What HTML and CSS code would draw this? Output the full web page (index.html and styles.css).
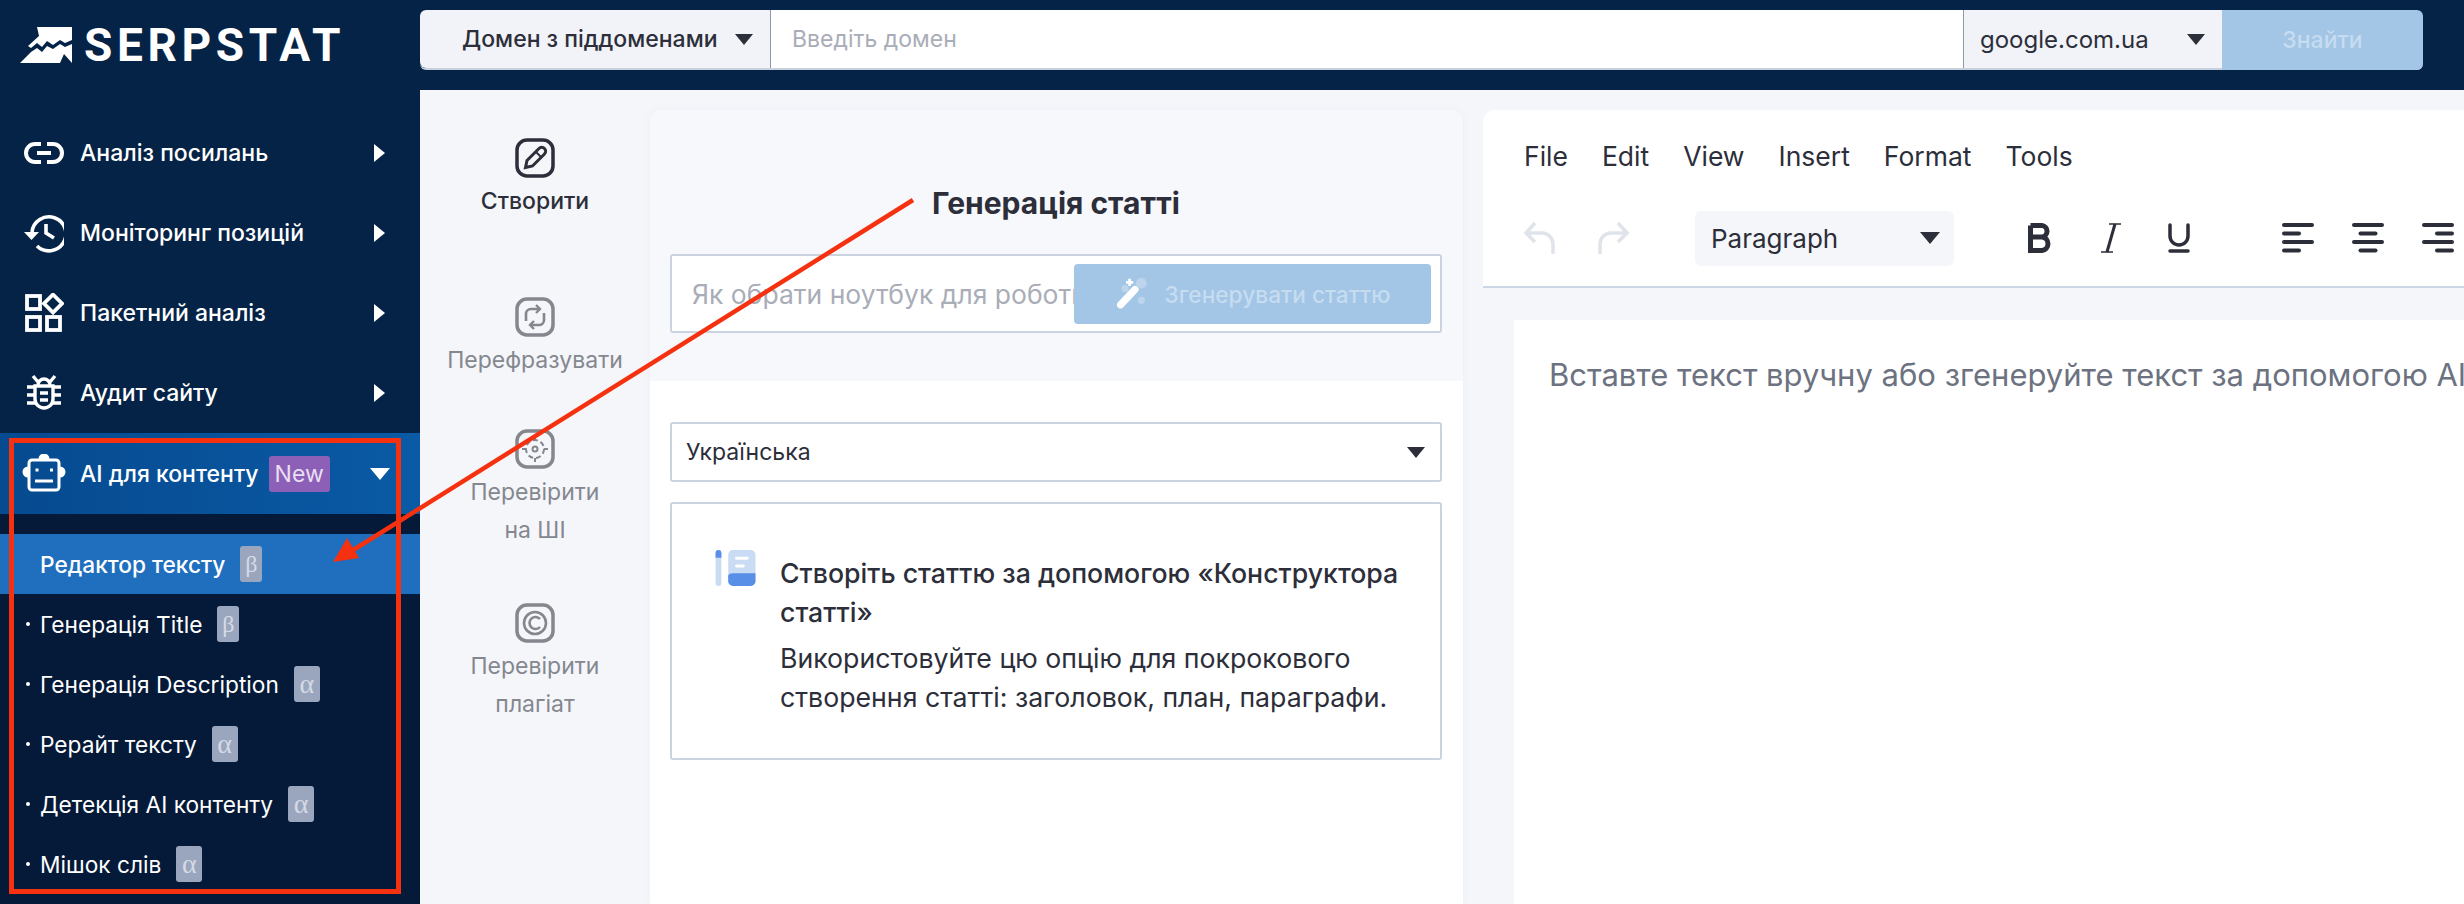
FILE: index.html
```html
<!DOCTYPE html>
<html lang="uk">
<head>
<meta charset="utf-8">
<title>Serpstat</title>
<link rel="stylesheet" href="styles.css">
</head>
<body>
<div class="app">
  <aside class="sidebar">
    <div class="brand">
      <svg class="brand-mark" viewBox="0 0 52 36"><path fill="#fff" d="M17 0H52V13L45 16L40 13L33 18L27 14L22 20L17 16L11 21L8 19L19 9Z"/><path fill="#fff" d="M0 36L11 25L17 21L22 25L27 19L33 22L40 17L45 20L52 17V36L44 27L40 36Z"/></svg>
      <span class="brand-name">SERPSTAT</span>
    </div>
    <nav class="nav">
      <a class="nav-item">
        <svg class="nav-icon" viewBox="0 0 40 40" fill="none" stroke="#fff" stroke-width="4"><path d="M17 11H11A9 9 0 0 0 11 29H17M23 11H29A9 9 0 0 1 29 29H23M13 20H27"/></svg>
        <span class="nav-text">Аналіз посилань</span><span class="caret-right"></span>
      </a>
      <a class="nav-item">
        <svg class="nav-icon" viewBox="0 0 40 40" fill="none" stroke="#fff" stroke-width="3.600"><path d="M8 19A17 17 0 1 1 13 33"/><path d="M22 11V20L30 25"/><path fill="#fff" stroke="none" d="M0 19H15L7.500 27Z"/></svg>
        <span class="nav-text">Моніторинг позицій</span><span class="caret-right"></span>
      </a>
      <a class="nav-item">
        <svg class="nav-icon" viewBox="0 0 40 40" fill="none" stroke="#fff" stroke-width="3.800"><rect x="3" y="3" width="13" height="13"/><path d="M29 1.500L38 10.500L29 19.500L20 10.500Z"/><rect x="3" y="24" width="13" height="13"/><rect x="23" y="24" width="13" height="13"/></svg>
        <span class="nav-text">Пакетний аналіз</span><span class="caret-right"></span>
      </a>
      <a class="nav-item">
        <svg class="nav-icon" viewBox="0 0 40 40" fill="none" stroke="#fff" stroke-width="3.400"><path d="M11 13H29V26A9 9 0 0 1 11 26Z"/><path d="M14 12A6 6 0 0 1 26 12M14 9L9 3M26 9L31 3M3 14H10M3 22H10M3 30H11M30 14H37M30 22H37M29 30H37M16 20H24M16 27H24"/></svg>
        <span class="nav-text">Аудит сайту</span><span class="caret-right"></span>
      </a>
      <a class="nav-item nav-item-open">
        <svg class="nav-icon nav-icon-robot" viewBox="0 0 44 40" fill="none" stroke="#fff" stroke-width="3"><rect x="7" y="6" width="30" height="30" rx="3"/><path d="M18 5A4 4 0 0 1 26 5Z" fill="#fff"/><path d="M6 13.500A4.500 4.500 0 0 0 6 22.500ZM38 13.500A4.500 4.500 0 0 1 38 22.500Z" fill="#fff" stroke-width="2"/><path d="M13 27H31"/><path d="M13.500 16H16.500M28 16H31"/></svg>
        <span class="nav-text">AI для контенту</span><span class="badge-new">New</span><span class="caret-down"></span>
      </a>
    </nav>
    <ul class="subnav">
      <li class="sub-item sub-item-active"><span class="sub-text">Редактор тексту</span><span class="tag tag-beta">β</span></li>
      <li class="sub-item"><span class="sub-text">Генерація Title</span><span class="tag tag-beta">β</span></li>
      <li class="sub-item"><span class="sub-text">Генерація Description</span><span class="tag">α</span></li>
      <li class="sub-item"><span class="sub-text">Рерайт тексту</span><span class="tag">α</span></li>
      <li class="sub-item"><span class="sub-text">Детекція AI контенту</span><span class="tag">α</span></li>
      <li class="sub-item"><span class="sub-text">Мішок слів</span><span class="tag">α</span></li>
    </ul>
    <div class="red-frame"></div>
  </aside>

  <div class="main">
    <header class="topbar">
      <div class="search">
        <div class="search-scope"><span>Домен з піддоменами</span><span class="caret-down caret-dark"></span></div>
        <div class="search-input">Введіть домен</div>
        <div class="search-engine"><span>google.com.ua</span><span class="caret-down caret-dark"></span></div>
        <div class="search-btn">Знайти</div>
      </div>
    </header>

    <div class="content">
      <div class="tools">
        <div class="tool tool-active">
          <svg class="tool-icon" viewBox="0 0 40 40" fill="none" stroke="currentColor" stroke-width="3.500"><rect x="2" y="2" width="36" height="36" rx="10"/><path d="M10.500 29.500L12 22.500L24 10.500A3.500 3.500 0 0 1 29.500 16L17.500 28Z" stroke-width="3"/><path d="M21 14L26 19" stroke-width="2"/></svg>
          <div class="tool-label">Створити</div>
        </div>
        <div class="tool">
          <svg class="tool-icon" viewBox="0 0 40 40" fill="none" stroke="currentColor" stroke-width="3.500"><rect x="2" y="2" width="36" height="36" rx="10"/><path d="M11 24V17A5 5 0 0 1 16 12H24M29 16V23A5 5 0 0 1 24 28H16" stroke-width="2.600"/><path d="M21 8L25 12L21 16M19 24L15 28L19 32" stroke-width="2.400"/></svg>
          <div class="tool-label">Перефразувати</div>
        </div>
        <div class="tool">
          <svg class="tool-icon" viewBox="0 0 40 40" fill="none" stroke="currentColor" stroke-width="3.500"><rect x="2" y="2" width="36" height="36" rx="10"/><circle cx="20" cy="20" r="9" stroke-width="2" stroke-dasharray="5 3"/><circle cx="20" cy="20" r="2.500" stroke-width="2"/><path d="M20 7V11M20 29V33M7 20H11M29 20H33" stroke-width="2"/></svg>
          <div class="tool-label">Перевірити<br>на ШІ</div>
        </div>
        <div class="tool">
          <svg class="tool-icon" viewBox="0 0 40 40" fill="none" stroke="currentColor" stroke-width="3.500"><rect x="2" y="2" width="36" height="36" rx="10"/><circle cx="20" cy="20" r="11" stroke-width="2.600"/><path d="M25 16A6 6 0 1 0 25 24" stroke-width="2.600"/></svg>
          <div class="tool-label">Перевірити<br>плагіат</div>
        </div>
      </div>

      <section class="generator">
        <div class="gen-head">
          <h1 class="gen-title">Генерація статті</h1>
          <div class="gen-input">
            <span class="gen-placeholder">Як обрати ноутбук для роботи</span>
            <div class="gen-btn">
              <svg class="wand" viewBox="0 0 40 40"><circle cx="27" cy="8" r="6" fill="#bcd5ec"/><circle cx="9" cy="14" r="4" fill="#bcd5ec"/><circle cx="27" cy="27" r="4" fill="#bcd5ec"/><path d="M4 32L20 15" stroke="#fff" stroke-width="8" stroke-linecap="round"/><path d="M14 3V11M10 7H18" stroke="#fff" stroke-width="3"/></svg>
              <span>Згенерувати статтю</span>
            </div>
          </div>
        </div>
        <div class="gen-body">
          <div class="lang-select"><span>Українська</span><span class="caret-down caret-dark"></span></div>
          <div class="info-card">
            <svg class="info-icon" viewBox="0 0 42 38"><rect x="0" y="0" width="6" height="37" rx="3" fill="#c9dcf3"/><path d="M0 3A3 3 0 0 1 6 3V8H0Z" fill="#5a8fe8"/><rect x="13" y="0" width="28" height="37" rx="5" fill="#c9dcf3"/><path d="M13 27Q13 24 18 24H41V32A5 5 0 0 1 36 37H18A5 5 0 0 1 13 32Z" fill="#5a8fe8"/><rect x="20" y="7" width="14" height="3" rx="1.500" fill="#fff"/><rect x="20" y="15" width="10" height="3" rx="1.500" fill="#fff"/></svg>
            <div class="info-text">
              <p class="info-title">Створіть статтю за допомогою «Конструктора статті»</p>
              <p class="info-desc">Використовуйте цю опцію для покрокового створення статті: заголовок, план, параграфи.</p>
            </div>
          </div>
        </div>
      </section>

      <section class="editor">
        <div class="menubar">
          <span class="menu-item">File</span><span class="menu-item">Edit</span><span class="menu-item">View</span><span class="menu-item">Insert</span><span class="menu-item">Format</span><span class="menu-item">Tools</span>
        </div>
        <div class="toolbar">
          <svg class="tb-hist" viewBox="0 0 32 34" fill="none" stroke="#dfe3ea" stroke-width="3.500"><path d="M11 2L2 12L11 21M2 12H18A11 11 0 0 1 29 23V33"/></svg>
          <svg class="tb-hist tb-redo" viewBox="0 0 32 34" fill="none" stroke="#dfe3ea" stroke-width="3.500"><path d="M21 2L30 12L21 21M30 12H14A11 11 0 0 0 3 23V33"/></svg>
          <div class="format-select"><span>Paragraph</span><span class="caret-down caret-dark"></span></div>
          <svg class="tb-b" viewBox="0 0 24 30" fill="none" stroke="#2c2e3a" stroke-width="5"><path d="M2.500 2.500H14A5.800 5.800 0 0 1 14 14H2.500M14 14A6.800 6.800 0 0 1 14 27.500H2.500V2.500"/></svg>
          <svg class="tb-i" viewBox="0 0 20 30" fill="none" stroke="#2c2e3a"><path d="M14 1L6 29" stroke-width="3"/><path d="M8 1H20M0 29H12" stroke-width="1.600"/></svg>
          <svg class="tb-u" viewBox="0 0 22 30" fill="none" stroke="#2c2e3a" stroke-width="3.500" stroke-linecap="round"><path d="M2 2V13A9 9 0 0 0 20 13V2"/><path d="M2 28H20"/></svg>
          <svg class="tb-al" viewBox="0 0 32 30" fill="#2c2e3a"><rect width="32" height="4" y="0" rx="2"/><rect width="19" height="4" y="8.500" rx="2"/><rect width="32" height="4" y="17" rx="2"/><rect width="19" height="4" y="25.500" rx="2"/></svg>
          <svg class="tb-al" viewBox="0 0 32 30" fill="#2c2e3a"><rect width="32" height="4" y="0" rx="2"/><rect x="6.500" width="19" height="4" y="8.500" rx="2"/><rect width="32" height="4" y="17" rx="2"/><rect x="6.500" width="19" height="4" y="25.500" rx="2"/></svg>
          <svg class="tb-al" viewBox="0 0 32 30" fill="#2c2e3a"><rect width="32" height="4" y="0" rx="2"/><rect x="13" width="19" height="4" y="8.500" rx="2"/><rect width="32" height="4" y="17" rx="2"/><rect x="13" width="19" height="4" y="25.500" rx="2"/></svg>
        </div>
        <div class="paper-area">
          <div class="paper">Вставте текст вручну або згенеруйте текст за допомогою AI</div>
        </div>
      </section>
    </div>
  </div>

  <svg class="callout" viewBox="0 0 2464 904"><path d="M913 200L350 552" stroke="#f5310f" stroke-width="4.500" fill="none"/><path d="M333 562L347 538L359 558Z" fill="#f5310f"/></svg>
</div>
</body>
</html>
```
FILE: styles.css
```css
* { box-sizing: border-box; }
html, body { margin: 0; padding: 0; }
body { font-family: Inter, Roboto, "Liberation Sans", sans-serif; color: #2c2e3a; background: #f4f6fa; }
.app { position: relative; display: flex; width: 2464px; height: 904px; overflow: hidden; }

/* Sidebar */
.sidebar { position: relative; flex: 0 0 420px; background: #052346; color: #fff; display: flex; flex-direction: column; }
.brand { display: flex; align-items: center; height: 90px; padding: 0 0 0 20px; margin-bottom: 23px; }
.brand-mark { width: 52px; height: 36px; margin-right: 12px; }
.brand-name { font-family: Roboto, sans-serif; font-weight: 700; font-size: 46px; letter-spacing: 4.600px; line-height: 1; }
.nav { display: flex; flex-direction: column; }
.nav-item { display: flex; align-items: center; height: 80px; padding: 0 0 0 24px; font-weight: 500; font-size: 23px; }
.nav-icon { flex: 0 0 40px; width: 40px; height: 40px; margin-right: 16px; }
.nav-icon-robot { flex: 0 0 44px; width: 44px; margin-left: -2px; margin-right: 14px; }
.nav-text { white-space: nowrap; }
.caret-right { width: 0; height: 0; margin-left: auto; margin-right: 35px; border-left: 11px solid #fff; border-top: 9px solid transparent; border-bottom: 9px solid transparent; }
.caret-down { width: 0; height: 0; border-top: 11px solid #fff; border-left: 9px solid transparent; border-right: 9px solid transparent; }
.caret-dark { border-top-color: #2c2e3a; }
.nav-item-open { background: linear-gradient(90deg, #064a8f, #0a5aa5); height: 81px; }
.nav-item-open .caret-down { margin-left: auto; margin-right: 30px; border-top-width: 12px; border-left-width: 10px; border-right-width: 10px; }
.badge-new { margin-left: 10px; padding: 0 6px; height: 36px; line-height: 36px; background: #8d60b8; color: #e9dff2; font-weight: 400; font-size: 23px; border-radius: 3px; }
.subnav { flex: 1; list-style: none; margin: 0; padding: 20px 0 0; background: #041a38; }
.sub-item { display: flex; align-items: center; height: 60px; padding-left: 40px; font-size: 22.700px; position: relative; white-space: nowrap; }
.sub-item::before { content: ""; position: absolute; left: 26px; top: 28px; width: 4px; height: 4px; border-radius: 50%; background: #fff; }
.sub-item-active { background: #1f6fbe; font-weight: 500; }
.sub-item-active::before { display: none; }
.tag { margin-left: 15px; width: 26px; height: 36px; line-height: 36px; text-align: center; background: #9aa6be; color: #d5dae5; font-family: "Liberation Serif", serif; font-size: 28px; border-radius: 3px; font-weight: 400; }
.tag-beta { width: 22px; font-size: 24px; }
.red-frame { position: absolute; left: 9px; top: 438px; width: 392px; height: 456px; border: 5px solid #f5310f; }
.callout { position: absolute; inset: 0; width: 2464px; height: 904px; pointer-events: none; }

/* Main */
.main { flex: 1; display: flex; flex-direction: column; min-width: 0; }
.topbar { height: 90px; flex: none; background: #052346; padding: 10px 41px 20px 0; }
.search { display: flex; height: 60px; font-size: 23px; border-radius: 6px; border-bottom: 2px solid #c8d0de; }
.search-scope { flex: 0 0 350px; display: flex; align-items: center; justify-content: space-between; padding: 0 17px 0 42px; background: #f1f3f8; border-radius: 6px 0 0 6px; font-weight: 500; white-space: nowrap; }
.search-input { flex: 1; display: flex; align-items: center; padding-left: 21px; background: #fff; color: #a9adb8; border-left: 1px solid #8f98a8; }
.search-engine { flex: 0 0 259px; display: flex; align-items: center; justify-content: space-between; padding: 0 17px 0 16px; background: #f1f3f8; border-left: 1px solid #8f98a8; font-size: 24px; }
.search-btn { flex: 0 0 201px; display: flex; align-items: center; justify-content: center; background: #a3c5e6; color: #c6dcf0; font-weight: 500; border-radius: 0 6px 6px 0; margin-bottom: -2px; }

.content { flex: 1; display: flex; padding-top: 20px; min-height: 0; }
.tools { flex: 0 0 230px; display: flex; flex-direction: column; align-items: center; padding-top: 28px; color: #85878f; }
.tool { display: flex; flex-direction: column; align-items: center; text-align: center; }
.tool-active { color: #2c2e3a; font-weight: 500; }
.tool-icon { width: 40px; height: 40px; }
.tool-label { margin-top: 4px; font-size: 23px; line-height: 38px; white-space: nowrap; }
.tool + .tool { margin-top: 77px; }
.tool:nth-child(3) { margin-top: 50px; }
.tool:nth-child(4) { margin-top: 54px; }

.generator { flex: 0 0 813px; margin-right: 20px; background: #fff; border-radius: 12px 12px 0 0; box-shadow: 0 0 8px rgba(60,80,120,.05); }
.gen-head { height: 271px; background: #f7f8fc; border-radius: 12px 12px 0 0; padding: 72px 21px 0 20px; }
.gen-title { margin: 0 0 30px; height: 42px; line-height: 42px; font-size: 30px; font-weight: 700; text-align: center; color: #2c2e3a; }
.gen-input { position: relative; height: 79px; display: flex; align-items: center; background: #fff; border: 2px solid #ccd3e0; border-radius: 3px; padding-left: 20px; overflow: hidden; }
.gen-placeholder { font-size: 26.500px; color: #a9adb8; white-space: nowrap; }
.gen-btn { position: absolute; right: 9px; top: 8px; width: 357px; height: 60px; display: flex; align-items: center; justify-content: center; gap: 12px; padding-left: 2px; background: #a3c5e6; border-radius: 4px; color: #c6dcf0; font-size: 22.700px; font-weight: 500; white-space: nowrap; }
.wand { width: 36px; height: 36px; }
.gen-body { padding: 41px 21px 0 20px; }
.lang-select { height: 60px; display: flex; align-items: center; justify-content: space-between; padding: 0 15px 0 14px; border: 2px solid #ccd3e0; border-radius: 3px; font-size: 23px; }
.info-card { display: flex; margin-top: 20px; height: 258px; border: 2px solid #ccd3e0; border-radius: 3px; padding: 46px 0 0 43px; }
.info-icon { flex: 0 0 42px; width: 42px; height: 37px; margin-right: 23px; }
.info-text { flex: 1; padding-right: 20px; font-size: 26.700px; line-height: 38.500px; }
.info-title { margin: 4px 0 8px; font-weight: 500; }
.info-desc { margin: 0; }

.editor { flex: 1; background: #fff; border-radius: 12px 0 0 0; display: flex; flex-direction: column; min-width: 0; }
.menubar { display: flex; height: 92px; padding: 0 0 0 41px; align-items: center; gap: 34px; font-size: 26.500px; }
.toolbar { display: flex; align-items: center; height: 86px; border-bottom: 2px solid #ccd5e3; padding: 2px 0 14px 41px; }
.tb-hist { width: 32px; height: 34px; flex: none; }
.tb-redo { margin-left: 41px; }
.format-select { flex: 0 0 259px; height: 55px; margin-left: 66px; display: flex; align-items: center; justify-content: space-between; padding: 0 14px 0 16px; background: #f4f6fa; border-radius: 6px; font-size: 26px; }
.format-select .caret-down { border-top-width: 12px; border-left-width: 10px; border-right-width: 10px; }
.tb-b { flex: none; width: 24px; height: 30px; margin-left: 74px; }
.tb-i { flex: none; width: 20px; height: 30px; margin-left: 49px; }
.tb-u { flex: none; width: 22px; height: 30px; margin-left: 47px; }
.tb-al { flex: none; width: 32px; height: 30px; margin-left: 38px; }
.tb-u + .tb-al { margin-left: 92px; }
.paper-area { flex: 1; background: #f4f6fa; padding: 32px 0 0 31px; overflow: hidden; }
.paper { height: 100%; background: #fff; padding: 37px 0 0 35px; font-size: 31px; line-height: 36px; color: #6c7280; white-space: nowrap; overflow: hidden; }
```
